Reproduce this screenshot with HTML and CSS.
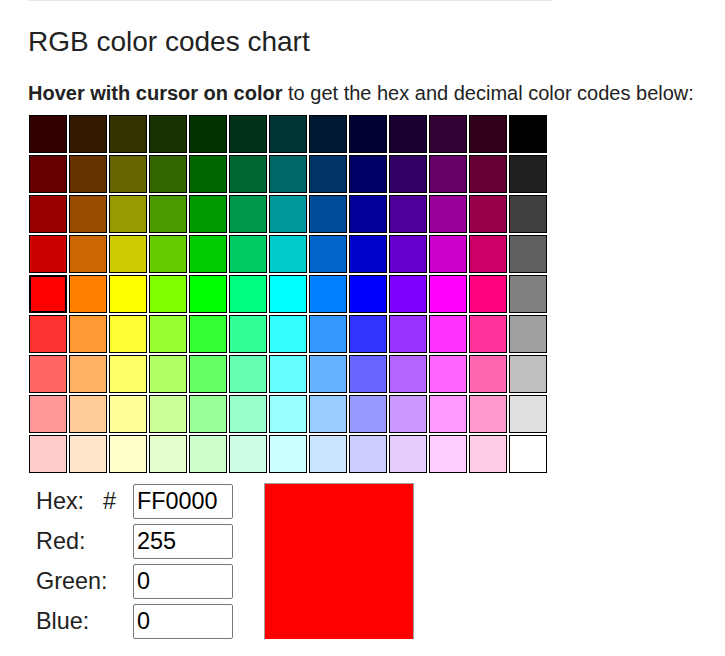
FILE: index.html
```html
<!DOCTYPE html>
<html lang="en">
<head>
<meta charset="utf-8">
<title>RGB color codes chart</title>
<link rel="stylesheet" href="styles.css">
</head>
<body>
<div class="page">
  <div class="topline"></div>
  <h1 class="title">RGB color codes chart</h1>
  <p class="intro"><b>Hover with cursor on color</b> to get the hex and decimal color codes below:</p>
  <div class="chart">
    <div class="cell" style="background:#330000"></div><div class="cell" style="background:#331900"></div><div class="cell" style="background:#333300"></div><div class="cell" style="background:#193300"></div><div class="cell" style="background:#003300"></div><div class="cell" style="background:#003319"></div><div class="cell" style="background:#003333"></div><div class="cell" style="background:#001933"></div><div class="cell" style="background:#000033"></div><div class="cell" style="background:#190033"></div><div class="cell" style="background:#330033"></div><div class="cell" style="background:#330019"></div><div class="cell" style="background:#000000"></div>
    <div class="cell" style="background:#660000"></div><div class="cell" style="background:#663300"></div><div class="cell" style="background:#666600"></div><div class="cell" style="background:#336600"></div><div class="cell" style="background:#006600"></div><div class="cell" style="background:#006633"></div><div class="cell" style="background:#006666"></div><div class="cell" style="background:#003366"></div><div class="cell" style="background:#000066"></div><div class="cell" style="background:#330066"></div><div class="cell" style="background:#660066"></div><div class="cell" style="background:#660033"></div><div class="cell" style="background:#202020"></div>
    <div class="cell" style="background:#990000"></div><div class="cell" style="background:#994c00"></div><div class="cell" style="background:#999900"></div><div class="cell" style="background:#4c9900"></div><div class="cell" style="background:#009900"></div><div class="cell" style="background:#00994c"></div><div class="cell" style="background:#009999"></div><div class="cell" style="background:#004c99"></div><div class="cell" style="background:#000099"></div><div class="cell" style="background:#4c0099"></div><div class="cell" style="background:#990099"></div><div class="cell" style="background:#99004c"></div><div class="cell" style="background:#404040"></div>
    <div class="cell" style="background:#cc0000"></div><div class="cell" style="background:#cc6600"></div><div class="cell" style="background:#cccc00"></div><div class="cell" style="background:#66cc00"></div><div class="cell" style="background:#00cc00"></div><div class="cell" style="background:#00cc66"></div><div class="cell" style="background:#00cccc"></div><div class="cell" style="background:#0066cc"></div><div class="cell" style="background:#0000cc"></div><div class="cell" style="background:#6600cc"></div><div class="cell" style="background:#cc00cc"></div><div class="cell" style="background:#cc0066"></div><div class="cell" style="background:#606060"></div>
    <div class="cell selected" style="background:#ff0000"></div><div class="cell" style="background:#ff8000"></div><div class="cell" style="background:#ffff00"></div><div class="cell" style="background:#80ff00"></div><div class="cell" style="background:#00ff00"></div><div class="cell" style="background:#00ff80"></div><div class="cell" style="background:#00ffff"></div><div class="cell" style="background:#0080ff"></div><div class="cell" style="background:#0000ff"></div><div class="cell" style="background:#7f00ff"></div><div class="cell" style="background:#ff00ff"></div><div class="cell" style="background:#ff007f"></div><div class="cell" style="background:#808080"></div>
    <div class="cell" style="background:#ff3333"></div><div class="cell" style="background:#ff9933"></div><div class="cell" style="background:#ffff33"></div><div class="cell" style="background:#99ff33"></div><div class="cell" style="background:#33ff33"></div><div class="cell" style="background:#33ff99"></div><div class="cell" style="background:#33ffff"></div><div class="cell" style="background:#3399ff"></div><div class="cell" style="background:#3333ff"></div><div class="cell" style="background:#9933ff"></div><div class="cell" style="background:#ff33ff"></div><div class="cell" style="background:#ff3399"></div><div class="cell" style="background:#a0a0a0"></div>
    <div class="cell" style="background:#ff6666"></div><div class="cell" style="background:#ffb266"></div><div class="cell" style="background:#ffff66"></div><div class="cell" style="background:#b2ff66"></div><div class="cell" style="background:#66ff66"></div><div class="cell" style="background:#66ffb2"></div><div class="cell" style="background:#66ffff"></div><div class="cell" style="background:#66b2ff"></div><div class="cell" style="background:#6666ff"></div><div class="cell" style="background:#b266ff"></div><div class="cell" style="background:#ff66ff"></div><div class="cell" style="background:#ff66b2"></div><div class="cell" style="background:#c0c0c0"></div>
    <div class="cell" style="background:#ff9999"></div><div class="cell" style="background:#ffcc99"></div><div class="cell" style="background:#ffff99"></div><div class="cell" style="background:#ccff99"></div><div class="cell" style="background:#99ff99"></div><div class="cell" style="background:#99ffcc"></div><div class="cell" style="background:#99ffff"></div><div class="cell" style="background:#99ccff"></div><div class="cell" style="background:#9999ff"></div><div class="cell" style="background:#cc99ff"></div><div class="cell" style="background:#ff99ff"></div><div class="cell" style="background:#ff99cc"></div><div class="cell" style="background:#e0e0e0"></div>
    <div class="cell" style="background:#ffcccc"></div><div class="cell" style="background:#ffe5cc"></div><div class="cell" style="background:#ffffcc"></div><div class="cell" style="background:#e5ffcc"></div><div class="cell" style="background:#ccffcc"></div><div class="cell" style="background:#ccffe5"></div><div class="cell" style="background:#ccffff"></div><div class="cell" style="background:#cce5ff"></div><div class="cell" style="background:#ccccff"></div><div class="cell" style="background:#e5ccff"></div><div class="cell" style="background:#ffccff"></div><div class="cell" style="background:#ffcce5"></div><div class="cell" style="background:#ffffff"></div>
  </div>
  <div class="codes">
    <label class="lbl">Hex:</label><span class="hash">#</span><input class="field row1" type="text" value="FF0000">
    <label class="lbl wide row2">Red:</label><input class="field row2" type="text" value="255">
    <label class="lbl wide row3">Green:</label><input class="field row3" type="text" value="0">
    <label class="lbl wide row4">Blue:</label><input class="field row4" type="text" value="0">
    <div class="preview" style="background:#ff0000"></div>
  </div>
</div>
</body>
</html>
```
FILE: styles.css
```css
html, body {
  margin: 0;
  padding: 0;
  background: #fff;
}

body {
  font-family: "Liberation Sans", Arial, sans-serif;
  color: #222;
}

.page {
  padding-left: 28px;
  width: 524px;
}

.topline {
  height: 1px;
  background: #e6e6e6;
}

.title {
  margin: 27px 0 0 0;
  font-size: 28px;
  line-height: 28px;
  font-weight: normal;
  color: #222;
}

.intro {
  margin: 25px 0 0 0;
  font-size: 20px;
  line-height: 24px;
  white-space: nowrap;
}

.intro b {
  font-weight: bold;
}

.chart {
  margin: 10px 0 0 1px;
  display: grid;
  grid-template-columns: repeat(13, 38px);
  grid-auto-rows: 38px;
  gap: 2px;
}

.cell {
  box-sizing: border-box;
  border: 1px solid #000;
}

.cell.selected {
  border: 2px solid #000;
}

.codes {
  margin: 10px 0 0 8px;
  display: grid;
  grid-template-columns: 67px 30px 100px 31px 150px;
  grid-template-rows: repeat(4, 36px);
  row-gap: 4px;
  align-items: center;
  font-size: 23.4px;
}

.lbl {
  grid-column: 1;
  color: #222;
  line-height: 28px;
}

.lbl.wide {
  grid-column: 1 / span 2;
}

.hash {
  grid-column: 2;
  grid-row: 1;
  color: #222;
  line-height: 28px;
}

.row1 { grid-row: 1; }
.row2 { grid-row: 2; }
.row3 { grid-row: 3; }
.row4 { grid-row: 4; }

.field {
  grid-column: 3;
  box-sizing: border-box;
  width: 100px;
  height: 35px;
  margin: 0;
  padding: 0 3px;
  border: 1px solid #767676;
  border-radius: 2px;
  font-family: "Liberation Sans", Arial, sans-serif;
  font-size: 23.4px;
  color: #000;
  background: #fff;
  align-self: end;
}

.preview {
  grid-column: 5;
  grid-row: 1 / span 4;
  box-sizing: border-box;
  width: 150px;
  height: 157px;
  border: 1px solid #a0a0a0;
  align-self: start;
}
```
